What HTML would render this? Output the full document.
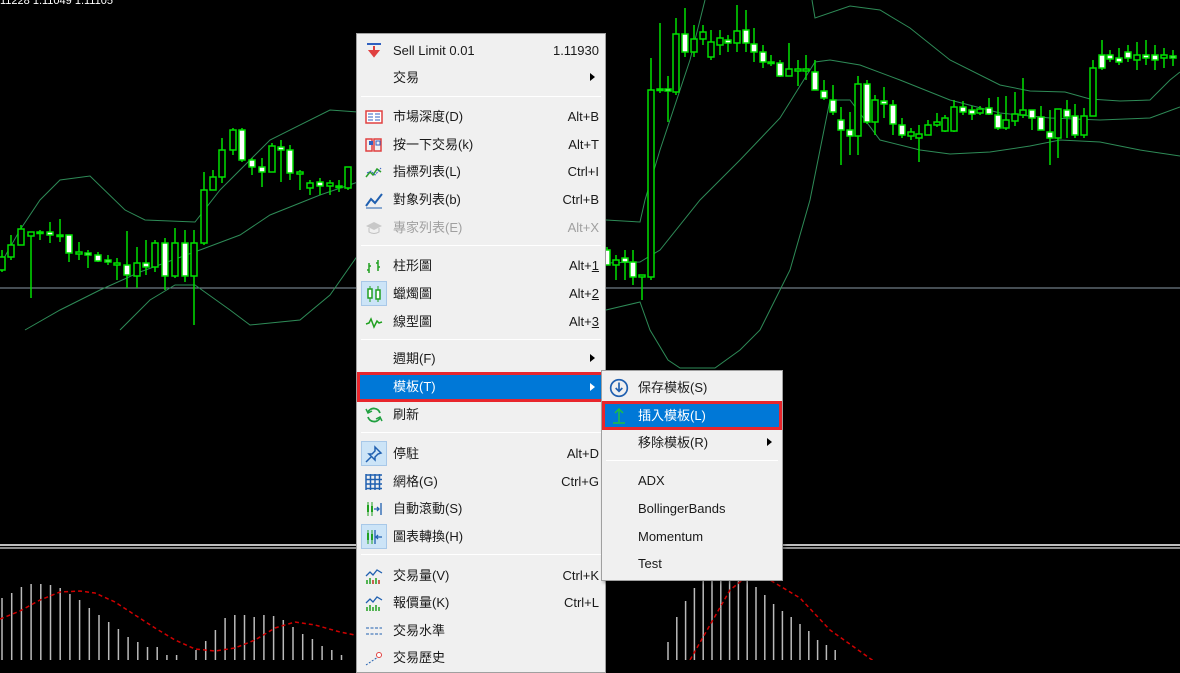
<!DOCTYPE html>
<html><head><meta charset="utf-8">
<style>
*{margin:0;padding:0;box-sizing:border-box}
body{width:1180px;height:660px;background:#000;position:relative;overflow:hidden;font-family:"Liberation Sans","Noto Sans CJK TC",sans-serif;font-size:13px;color:#1a1a1a}
#chart{position:absolute;left:0;top:0}
.hdr{position:absolute;left:0;top:-5px;color:#fff;font-size:11px;font-family:"Liberation Sans",sans-serif}
.menu{position:absolute;background:#f0f0f0;border:1px solid #a0a0a0}
.it{position:absolute;left:0;right:0;height:27px;line-height:27px}
.it .l{position:absolute;left:36px}
.it .r{position:absolute;right:6px}
.dis{color:#a0a0a0}
.sep{position:absolute;left:4px;right:4px;height:1px;background:#b8b8b8;border-bottom:1px solid #fff}
.arr{position:absolute;right:10px;top:9px;width:0;height:0;border-left:5px solid #000;border-top:4px solid transparent;border-bottom:4px solid transparent}
.hl{background:#0078d7;color:#fff;outline:3px solid #e8262c;outline-offset:-3px}
.hl .arr{border-left-color:#fff}
.ic{position:absolute;left:8px;top:5px;width:18px;height:18px}
.box{position:absolute;left:4px;top:1px;width:26px;height:25px;background:#cce4f7;border:1px solid #a8c8e8}
u{text-decoration:underline}
</style></head><body>
<svg id="chart" width="1180" height="660" xmlns="http://www.w3.org/2000/svg">
<line x1="0" y1="288" x2="1180" y2="288" stroke="#8a9aa6" stroke-width="1"/>
<g fill="none" stroke="#2e8b57" stroke-width="1">
<polyline points="0,265 20,230 40,200 60,180 90,176 125,210 145,220 195,222 220,190 270,140 330,110 358,112"/>
<polyline points="25,330 60,310 100,290 140,272 200,250 240,235 270,215 320,195 358,182"/>
<polyline points="120,330 150,300 175,285 195,285 230,310 250,325 300,320 330,295 358,255"/>
<polyline points="606,220 640,222 645,200 660,150 690,60 705,0"/>
<polyline points="812,0 815,18 850,6 880,10 910,28 950,60 1000,85 1030,91 1065,92 1090,99 1120,101 1150,100 1170,80 1180,72"/>
<polyline points="606,263 640,262 660,250 700,200 740,160 780,118 815,62 830,60 860,65 900,80 950,100 1000,113 1050,118 1100,120 1150,118 1180,107"/>
<polyline points="606,310 640,302 650,330 668,360 680,368 715,368 740,350 760,330 790,270 810,200 820,150 830,100 850,100 880,140 920,150 950,154 990,152 1030,146 1060,140 1100,142 1140,150 1180,156"/>
</g>
<g id="cd"></g>
<rect x="0" y="544" width="1180" height="2" fill="#bdbdbd"/>
<rect x="0" y="547" width="1180" height="2" fill="#8c8c8c"/>
<g id="vb"></g>
<polyline fill="none" stroke="#d00000" stroke-width="1.5" stroke-dasharray="4,3" points="0,619 20,611 40,600 60,592 80,591 95,593 115,602 135,615 155,628 175,640 195,649 215,651 235,648 255,640 275,628 295,622 315,625 340,632 360,636"/>
<polyline fill="none" stroke="#d00000" stroke-width="1.5" stroke-dasharray="4,3" points="690,660 710,625 730,590 745,578 770,580 800,598 830,630 875,662"/>
</svg>
<div class="hdr">11228 1.11049 1.11105</div>

<div class="menu" style="left:356px;top:33px;width:250px;height:640px">
 <div class="it" style="top:3px"><svg class="ic" viewBox="0 0 18 18"><line x1="2" y1="2" x2="16" y2="2" stroke="#3060c0" stroke-width="2"/><path d="M9 4v7M5 9l4 5 4-5z" stroke="#e04040" fill="#e04040" stroke-width="2"/></svg><span class="l">Sell Limit 0.01</span><span class="r">1.11930</span></div>
 <div class="it" style="top:30px"><span class="l">交易</span><i class="arr"></i></div>
 <div class="sep" style="top:62px"></div>
 <div class="it" style="top:69px"><svg class="ic" viewBox="0 0 18 18"><rect x="1" y="3" width="16" height="12" fill="#fff" stroke="#e04040" stroke-width="1.5"/><path d="M3 6h5M3 9h5M3 12h5M10 6h5M10 9h5M10 12h5" stroke="#3060c0"/></svg><span class="l">市場深度(D)</span><span class="r">Alt+B</span></div>
 <div class="it" style="top:97px"><svg class="ic" viewBox="0 0 18 18"><path d="M1 3h6v12H1zM9 3h7v12H9z" fill="none" stroke="#e04040" stroke-width="1.5"/><rect x="4" y="5" width="4" height="4" fill="#3060c0"/><rect x="11" y="5" width="4" height="4" fill="none" stroke="#3060c0"/></svg><span class="l">按一下交易(k)</span><span class="r">Alt+T</span></div>
 <div class="it" style="top:124px"><svg class="ic" viewBox="0 0 18 18"><path d="M1 14l4-5 3 3 4-6 4 3" fill="none" stroke="#2aa02a" stroke-width="1.5"/><path d="M2 10l4-2 4 4 6-7" fill="none" stroke="#3060c0" stroke-dasharray="2,1"/></svg><span class="l">指標列表(L)</span><span class="r">Ctrl+I</span></div>
 <div class="it" style="top:152px"><svg class="ic" viewBox="0 0 18 18"><path d="M1 15l5-7 4 4 7-9" fill="none" stroke="#2060b0" stroke-width="2"/><line x1="1" y1="17" x2="17" y2="17" stroke="#2060b0"/></svg><span class="l">對象列表(b)</span><span class="r">Ctrl+B</span></div>
 <div class="it dis" style="top:180px"><svg class="ic" viewBox="0 0 18 18"><path d="M1 7l8-4 8 4-8 4z" fill="#c8c8c8"/><path d="M4 9v4c3 2 7 2 10 0V9" fill="none" stroke="#c0c0c0"/></svg><span class="l">專家列表(E)</span><span class="r">Alt+X</span></div>
 <div class="sep" style="top:211px"></div>
 <div class="it" style="top:218px"><svg class="ic" viewBox="0 0 18 18"><path d="M4 6v10M2 13h2M4 9h2M13 3v11M11 6h2M13 10h2" stroke="#20a020" stroke-width="1.5" fill="none"/></svg><span class="l">柱形圖</span><span class="r">Alt+<u>1</u></span></div>
 <div class="it" style="top:246px"><span class="box"></span><svg class="ic" viewBox="0 0 18 18"><path d="M5 1v16M13 1v16" stroke="#20a020"/><rect x="3" y="4" width="4" height="9" fill="#fff" stroke="#20a020" stroke-width="1.5"/><rect x="11" y="5" width="4" height="9" fill="#fff" stroke="#20a020" stroke-width="1.5"/></svg><span class="l">蠟燭圖</span><span class="r">Alt+<u>2</u></span></div>
 <div class="it" style="top:274px"><svg class="ic" viewBox="0 0 18 18"><path d="M1 11l3-1 2-4 3 8 3-6 2 2 3-1" fill="none" stroke="#20a020" stroke-width="1.5"/></svg><span class="l">線型圖</span><span class="r">Alt+<u>3</u></span></div>
 <div class="sep" style="top:305px"></div>
 <div class="it" style="top:311px"><span class="l">週期(F)</span><i class="arr"></i></div>
 <div class="it hl" style="top:338px;height:30px;line-height:30px"><span class="l">模板(T)</span><i class="arr" style="top:11px"></i></div>
 <div class="it" style="top:367px"><svg class="ic" viewBox="0 0 18 18"><path d="M15 7a6.5 6.5 0 0 0-12-1M3 11a6.5 6.5 0 0 0 12 1" fill="none" stroke="#20a040" stroke-width="1.8"/><path d="M1 3l2 4 4-2M17 15l-2-4-4 2" fill="none" stroke="#20a040" stroke-width="1.5"/></svg><span class="l">刷新</span></div>
 <div class="sep" style="top:398px"></div>
 <div class="it" style="top:406px"><span class="box"></span><svg class="ic" viewBox="0 0 18 18"><path d="M10 2l6 6-3 1-3 3 0 3-6-6 3 0 3-3z" fill="none" stroke="#2060b0" stroke-width="1.5"/><line x1="6" y1="12" x2="1" y2="17" stroke="#2060b0" stroke-width="1.5"/></svg><span class="l">停駐</span><span class="r">Alt+D</span></div>
 <div class="it" style="top:434px"><svg class="ic" viewBox="0 0 18 18"><path d="M1 1v16M5.5 1v16M10 1v16M14.5 1v16M1 2h16M1 6.5h16M1 11h16M1 15.5h16" stroke="#2060b0" stroke-width="1.5"/></svg><span class="l">網格(G)</span><span class="r">Ctrl+G</span></div>
 <div class="it" style="top:461px"><svg class="ic" viewBox="0 0 18 18"><path d="M3 2v14M7 2v14" stroke="#20a020"/><rect x="2" y="5" width="2" height="7" fill="#20a020"/><rect x="6" y="6" width="2" height="6" fill="#20a020"/><path d="M9 9h5M12 7l2 2-2 2M16 3v12" stroke="#2060b0" stroke-width="1.3" fill="none"/></svg><span class="l">自動滾動(S)</span></div>
 <div class="it" style="top:489px"><span class="box"></span><svg class="ic" viewBox="0 0 18 18"><path d="M3 2v14M7 2v14" stroke="#20a020"/><rect x="2" y="5" width="2" height="7" fill="#20a020"/><rect x="6" y="6" width="2" height="6" fill="#20a020"/><path d="M10 2v14M11 9h6M13 7l-2 2 2 2" stroke="#2060b0" stroke-width="1.3" fill="none"/></svg><span class="l">圖表轉換(H)</span></div>
 <div class="sep" style="top:520px"></div>
 <div class="it" style="top:528px"><svg class="ic" viewBox="0 0 18 18"><path d="M1 9l4-4 3 3 4-5 5 3" fill="none" stroke="#2060b0" stroke-width="1.3"/><path d="M2 17v-4M5 17v-6M8 17v-4M11 17v-6M14 17v-4" stroke="#20a020" stroke-width="1.5"/><path d="M8 17v-4M14 17v-4" stroke="#e04040" stroke-width="1.5"/></svg><span class="l">交易量(V)</span><span class="r">Ctrl+K</span></div>
 <div class="it" style="top:555px"><svg class="ic" viewBox="0 0 18 18"><path d="M1 9l4-4 3 3 4-5 5 3" fill="none" stroke="#2060b0" stroke-width="1.3"/><path d="M2 17v-4M5 17v-6M8 17v-4M11 17v-6M14 17v-4" stroke="#20a020" stroke-width="1.5"/></svg><span class="l">報價量(K)</span><span class="r">Ctrl+L</span></div>
 <div class="it" style="top:583px"><svg class="ic" viewBox="0 0 18 18"><path d="M1 6h16M1 12h16" stroke="#2060b0" stroke-dasharray="3,1.5"/></svg><span class="l">交易水準</span></div>
 <div class="it" style="top:610px"><svg class="ic" viewBox="0 0 18 18"><path d="M1 16l6-4 6-4" stroke="#2060b0" stroke-dasharray="2,1.5"/><circle cx="14" cy="6" r="2.5" fill="#fff" stroke="#e04040"/></svg><span class="l">交易歷史</span></div>
</div>

<div class="menu" style="left:601px;top:370px;width:182px;height:211px;box-shadow:2px 2px 3px rgba(0,0,0,.3)">
 <div class="it" style="top:3px"><svg class="ic" viewBox="0 0 18 18" style="left:7px;top:4px;width:20px;height:20px"><circle cx="9" cy="9" r="7.5" fill="none" stroke="#2060b0" stroke-width="1.5"/><path d="M9 4v8M6 9l3 3 3-3" fill="none" stroke="#2060b0" stroke-width="1.5"/></svg><span class="l">保存模板(S)</span></div>
 <div class="it hl" style="top:30px;height:29px;line-height:29px"><svg class="ic" viewBox="0 0 18 18"><path d="M9 16V3M5 7l4-4 4 4" fill="none" stroke="#20c040" stroke-width="1.5"/><path d="M3 17h12" stroke="#20c040" stroke-width="1.5"/></svg><span class="l">插入模板(L)</span></div>
 <div class="it" style="top:58px"><span class="l">移除模板(R)</span><i class="arr"></i></div>
 <div class="sep" style="top:89px"></div>
 <div class="it" style="top:96px"><span class="l">ADX</span></div>
 <div class="it" style="top:124px"><span class="l">BollingerBands</span></div>
 <div class="it" style="top:152px"><span class="l">Momentum</span></div>
 <div class="it" style="top:179px"><span class="l">Test</span></div>
</div>

<script>
var C=[[2,250,272,257,270,0],[11,235,260,245,257,0],[21,225,245,229,245,0],[31,232,298,232,236,0],[40,230,240,232,233,0],[50,222,243,232,235,1],[60,219,242,235,236,0],[69,235,262,235,253,1],[79,242,260,252,254,0],[88,250,268,253,255,1],[98,252,262,255,261,1],[108,255,265,260,262,1],[117,258,280,263,265,0],[127,231,288,265,275,1],[137,247,288,263,276,0],[146,240,275,263,267,1],[155,240,272,243,267,0],[165,238,290,243,276,1],[175,228,278,243,276,0],[185,230,282,243,276,1],[194,230,325,243,276,0],[204,172,245,190,243,0],[213,170,190,177,190,0],[222,138,183,150,177,0],[233,128,155,130,150,0],[242,128,162,130,160,1],[252,158,175,160,167,1],[262,158,187,167,172,1],[272,143,172,146,172,0],[281,140,182,147,150,1],[290,145,180,150,173,1],[300,170,190,172,174,0],[310,180,195,183,188,0],[320,178,195,182,186,1],[330,180,195,183,186,0],[339,180,192,186,187,0],[348,167,190,167,188,0],
[607,247,265,250,265,1],[616,255,280,260,265,0],[625,250,280,258,262,1],[633,250,285,262,277,1],[642,275,300,275,277,0],[651,58,280,90,277,0],[660,23,93,89,90,1],[668,76,122,89,91,1],[676,18,95,34,92,0],[685,8,57,34,52,1],[694,25,57,39,52,0],[703,25,45,32,39,0],[711,30,60,42,57,0],[720,30,55,38,45,0],[728,35,52,40,43,1],[737,5,52,31,43,0],[746,10,52,30,43,1],[754,28,62,44,52,1],[763,45,68,52,62,1],[771,55,66,62,63,0],[780,60,77,63,76,1],[789,43,76,69,76,0],[798,60,86,69,71,0],[806,55,80,69,71,0],[815,60,86,72,90,1],[824,80,100,91,98,1],[833,85,115,100,112,1],[841,107,165,120,130,1],[850,112,155,130,136,1],[858,76,155,84,136,0],[867,80,124,84,122,1],[875,95,135,100,122,0],[884,87,118,101,104,1],[893,100,135,105,124,1],[902,118,138,125,135,1],[911,128,140,132,136,0],[919,125,162,134,138,0],[928,120,135,125,135,0],[937,113,127,122,125,0],[945,115,132,118,131,0],[954,100,132,107,131,0],[963,101,115,107,112,1],[972,106,120,110,114,1],[980,106,115,109,113,0],[989,98,115,108,114,1],[998,97,130,115,128,1],[1006,96,130,120,128,0],[1015,92,126,114,121,0],[1023,78,118,110,115,0],[1032,110,130,110,118,1],[1041,106,130,117,130,1],[1050,110,165,132,138,1],[1058,110,158,109,138,0],[1067,100,138,110,117,1],[1075,104,138,116,135,1],[1084,108,138,116,135,0],[1093,60,105,68,116,0],[1102,40,70,55,68,1],[1110,50,62,55,59,1],[1119,48,65,58,62,1],[1128,45,62,52,58,1],[1137,42,70,55,60,0],[1146,40,65,55,58,1],[1155,45,70,55,60,1],[1164,48,68,55,58,0],[1173,50,66,56,58,1]];
var s='';C.forEach(function(c){s+='<line x1="'+c[0]+'" y1="'+c[1]+'" x2="'+c[0]+'" y2="'+c[2]+'" stroke="#00e000" stroke-width="1.5"/>';var h=Math.max(c[4]-c[3],1.5);s+='<rect x="'+(c[0]-3)+'" y="'+c[3]+'" width="6" height="'+h+'" fill="'+(c[5]?'#fff':'#000')+'" stroke="#00e000" stroke-width="1.5"/>';});
document.getElementById('cd').innerHTML=s;
var L=[598,593,587,584,584,585,588,594,600,608,615,622,629,637,642,647,647,655,655,662,650,641,630,618,615,615,617,615,616,620,627,634,639,646,650,655];
var v='';L.forEach(function(y,i){var x=2+i*9.7;v+='<line x1="'+x+'" y1="'+y+'" x2="'+x+'" y2="660" stroke="#bbb" stroke-width="1.5"/>';});
var R=[642,617,601,588,580,578,578,578,578,580,587,595,604,611,617,624,631,640,645,650];
R.forEach(function(y,i){var x=668+i*8.8;v+='<line x1="'+x+'" y1="'+y+'" x2="'+x+'" y2="660" stroke="#bbb" stroke-width="1.5"/>';});
document.getElementById('vb').innerHTML=v;
</script>
</body></html>
